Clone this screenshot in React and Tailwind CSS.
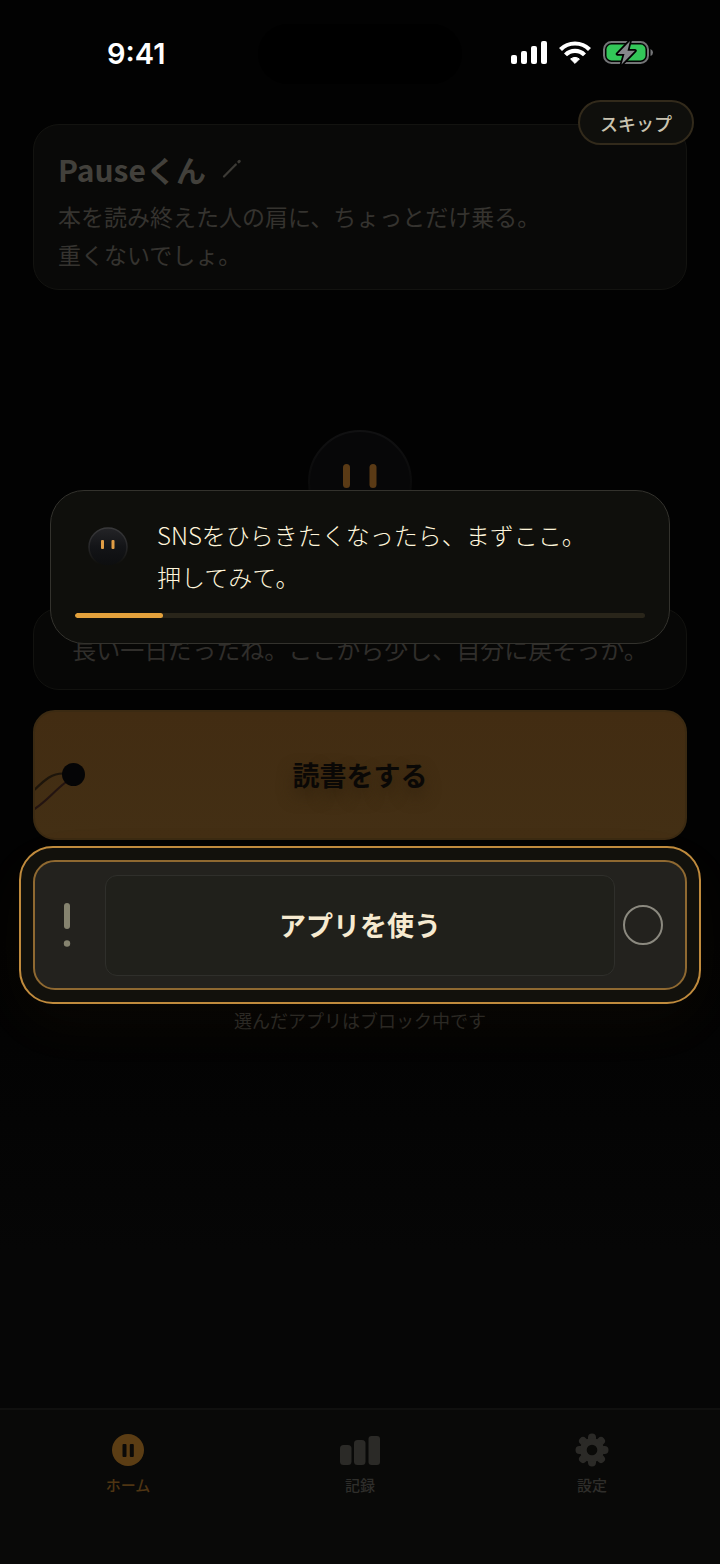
import React from "react";

function StatusBar() {
  return (
    <header className="flex h-[106px] items-start justify-between pl-[107px] pr-[66px] pt-9 text-white">
      <time className="font-[Inter,sans-serif] text-[29px] font-semibold leading-9">9:41</time>
      <svg width="143" height="26" viewBox="0 0 143 26" className="mt-1" role="img" aria-label="電波、Wi-Fi、充電中">
        <g fill="#fff">
          <rect x="0" y="15" width="6" height="9" rx="2" />
          <rect x="10" y="11" width="6" height="13" rx="2" />
          <rect x="20" y="6" width="6" height="18" rx="2" />
          <rect x="30" y="1" width="6" height="23" rx="2" />
          <path d="M64 23.400 L59.600 19 Q64 15.800 68.400 19 Z" stroke="#fff" strokeWidth="1" strokeLinejoin="round" />
        </g>
        <path d="M49.500 9.500 A20.500 20.500 0 0 1 78.500 9.500" fill="none" stroke="#fff" strokeWidth="4.200" />
        <path d="M54.500 14.900 A13.300 13.300 0 0 1 73.500 14.900" fill="none" stroke="#fff" strokeWidth="4.200" />
        <rect x="93" y="2" width="44" height="21" rx="7.500" fill="none" stroke="#737476" strokeWidth="2" />
        <path d="M139.500 9 Q142 10 142 12.500 Q142 15 139.500 16 Z" fill="#737476" />
        <rect x="95.500" y="4.500" width="39" height="16" rx="5" fill="#33c759" />
        <path d="M119 1 L106.500 14 H113.500 L110.500 24.500 L124 10.800 H116.500 Z" fill="#85878a" stroke="#000" strokeWidth="3.500" strokeLinejoin="round" paintOrder="stroke" />
      </svg>
    </header>
  );
}

function ProfileCard() {
  return (
    <section className="rounded-[26px] border border-[#131310] bg-[#090908] px-6 pb-4 pt-6">
      <div className="flex items-center gap-[14px]">
        <h1 className="text-[30px] font-bold leading-10 text-[#42403b]">Pauseくん</h1>
        <button type="button" aria-label="名前を編集" className="flex size-6 items-center justify-center">
          <svg width="20" height="20" viewBox="0 0 20 20" stroke="#3d3b36" strokeLinecap="round">
            <path d="M2 17.500 L13.800 5.500" strokeWidth="2.200" />
            <path d="M16.800 2.800 L17.300 2.300" strokeWidth="3" />
          </svg>
        </button>
      </div>
      <p className="mt-2 text-[23px] leading-[38px] text-[#35332f]">
        本を読み終えた人の肩に、ちょっとだけ乗る。
        <br />
        重くないでしょ。
      </p>
    </section>
  );
}

function Mascot() {
  return (
    <svg width="104" height="104" viewBox="0 0 104 104" className="mx-auto mt-[140px]" aria-hidden="true">
      <defs>
        <linearGradient id="mascotEdge" x1="0" y1="0" x2="0" y2="1">
          <stop offset="0" stopColor="#111112" />
          <stop offset="0.600" stopColor="#090909" />
        </linearGradient>
      </defs>
      <circle cx="52" cy="52" r="51" fill="#070708" stroke="url(#mascotEdge)" strokeWidth="2" />
      <rect x="35" y="34" width="7" height="24" rx="3.500" fill="#5a3a15" />
      <rect x="61.500" y="34" width="7" height="24" rx="3.500" fill="#5a3a15" />
    </svg>
  );
}

function ReadButton() {
  return (
    <button
      type="button"
      className="relative mt-5 flex h-[130px] w-full items-center justify-center overflow-hidden rounded-[22px] border-2 border-[#3b2a12] bg-linear-to-b from-[#422c12] to-[#432f14] text-[27px] font-bold text-[#0a0806] [text-shadow:0_8px_16px_#33230e]"
    >
      <svg width="60" height="70" viewBox="0 0 60 70" className="absolute left-[-2px] top-[33px]" fill="none" aria-hidden="true">
        <path d="M-2 48 C10 37 17 28 31 28.500" stroke="#1d150b" strokeWidth="2.200" />
        <path d="M-2 66 C10 60 20 47 33 37" stroke="#231411" strokeWidth="2.200" />
        <circle cx="40.500" cy="29.500" r="11.500" fill="#050506" />
      </svg>
      読書をする
    </button>
  );
}

function AppButton() {
  return (
    <div className="relative mt-5">
      <div aria-hidden="true" className="absolute -inset-x-[14px] -inset-y-[14px] rounded-[34px] border-2 border-[#c08b3d] bg-[#12110c] shadow-[0_20px_60px_rgba(224,150,40,0.04)]" />
      <button
        type="button"
        className="relative grid h-[130px] w-full grid-cols-[70px_1fr_70px] items-center rounded-[22px] border-2 border-[#8f6931] bg-[#23221e] py-3"
      >
        <svg width="8" height="44" viewBox="0 0 8 44" className="ml-7" aria-hidden="true">
          <rect x="1" y="0" width="6" height="26" rx="3" fill="#85836f" />
          <circle cx="4" cy="40.500" r="3.200" fill="#85836f" />
        </svg>
        <span className="flex h-[101px] items-center justify-center rounded-xl border border-[#2f2f2b] bg-[#20201b] text-[27px] font-bold text-[#f6ead0]">
          アプリを使う
        </span>
        <span className="ml-2 size-10 rounded-full border-2 border-[#8b897f]" />
      </button>
    </div>
  );
}

function HomeIcon() {
  return (
    <svg width="34" height="34" viewBox="0 0 34 34" aria-hidden="true">
      <circle cx="17" cy="17" r="16" fill="#5b3d14" />
      <rect x="11.500" y="11" width="4" height="13" rx="1" fill="#0b0a08" />
      <rect x="18.800" y="11" width="4" height="13" rx="1" fill="#0b0a08" />
    </svg>
  );
}

function RecordIcon() {
  return (
    <svg width="42" height="34" viewBox="0 0 42 34" fill="#2b2a27" aria-hidden="true">
      <rect x="1" y="12" width="11.500" height="20" rx="3.500" />
      <rect x="15" y="7" width="11.500" height="25" rx="3.500" />
      <rect x="29.500" y="3" width="11.500" height="29" rx="3" />
    </svg>
  );
}

function SettingsIcon() {
  return (
    <svg width="34" height="34" viewBox="0 0 34 34" stroke="#2b2a27" aria-hidden="true">
      <path d="M17 4.500 V29.500 M4.500 17 H29.500 M8 8 L26 26 M26 8 L8 26" strokeWidth="8" strokeLinecap="round" />
      <circle cx="17" cy="17" r="12" fill="#2b2a27" stroke="none" />
      <circle cx="17" cy="17" r="5.300" fill="#0a0a08" stroke="none" />
    </svg>
  );
}

const TABS = [
  { label: "ホーム", Icon: HomeIcon, color: "text-[#4f3513]" },
  { label: "記録", Icon: RecordIcon, color: "text-[#2f2e2b]" },
  { label: "設定", Icon: SettingsIcon, color: "text-[#2f2e2b]" },
];

function TabBar() {
  return (
    <nav className="mt-auto flex h-[156px] items-start border-t-2 border-[#10100f] bg-[#090908] px-3 pt-[23px]">
      {TABS.map(({ label, Icon, color }) => (
        <a key={label} href="#" className={"flex flex-1 flex-col items-center gap-2 text-[15px] font-medium leading-5 " + color}>
          <Icon />
          {label}
        </a>
      ))}
    </nav>
  );
}

function GuideBubble() {
  return (
    <div role="dialog" aria-label="ガイド" className="absolute inset-x-[50px] top-[490px] rounded-[34px] border border-[#33322d] bg-[#0f0f0c] px-6 pb-[25px] pt-[23px]">
      <div className="flex gap-7">
        <svg width="42" height="42" viewBox="0 0 42 42" className="ml-3 mt-3 shrink-0" aria-hidden="true">
          <defs>
            <linearGradient id="avatarEdge" x1="0" y1="0" x2="0" y2="1">
              <stop offset="0" stopColor="#39393b" />
              <stop offset="0.500" stopColor="#262628" />
              <stop offset="0.950" stopColor="#0f0f0c" />
            </linearGradient>
            <linearGradient id="avatarBody" x1="0" y1="0" x2="0" y2="1">
              <stop offset="0" stopColor="#242427" />
              <stop offset="0.500" stopColor="#131417" />
              <stop offset="1" stopColor="#0d0e0f" />
            </linearGradient>
          </defs>
          <circle cx="21" cy="21" r="19" fill="url(#avatarBody)" stroke="url(#avatarEdge)" strokeWidth="1.500" />
          <rect x="14" y="14" width="3" height="9" rx="1" fill="#e09d45" />
          <rect x="24.500" y="14" width="3" height="9" rx="1" fill="#e09d45" />
        </svg>
        <p className="text-2xl/[42px] font-light text-[#fff6dc]">
          SNSをひらきたくなったら、まずここ。
          <br />
          押してみて。
        </p>
      </div>
      <div role="progressbar" aria-label="進み具合" aria-valuenow={15} aria-valuemin={0} aria-valuemax={100} className="mt-[15px] h-[5px] overflow-hidden rounded-full bg-[#29251a]">
        <div className="h-full w-[15.5%] rounded-full bg-[#e3a13c]" />
      </div>
    </div>
  );
}

export default function App() {
  return (
    <div className="relative flex min-h-screen flex-col bg-linear-to-b from-[#020202] from-60% to-[#060606] to-80% font-['Noto_Sans_CJK_JP',sans-serif]">
      <div aria-hidden="true" className="absolute left-1/2 top-6 h-[60px] w-[204px] -translate-x-1/2 rounded-full bg-black" />
      <StatusBar />
      <main className="px-[33px] pb-8 pt-[18px]">
        <ProfileCard />
        <Mascot />
        <p className="mt-[74px] rounded-[26px] border border-[#12120f] bg-[#070706] py-[21px] text-center text-2xl/[38px] text-[#302e2b]">
          長い一日だったね。ここから少し、自分に戻そっか。
        </p>
        <ReadButton />
        <AppButton />
        <p className="mt-4 text-center text-lg/7 text-[#282724]">選んだアプリはブロック中です</p>
      </main>
      <TabBar />
      <GuideBubble />
      <button type="button" className="absolute right-[26px] top-[100px] h-[45px] rounded-full border-2 border-[#322a1b] bg-[#0f0f0c] px-5 text-lg font-medium leading-5 text-[#c9c3b0]">
        スキップ
      </button>
    </div>
  );
}
